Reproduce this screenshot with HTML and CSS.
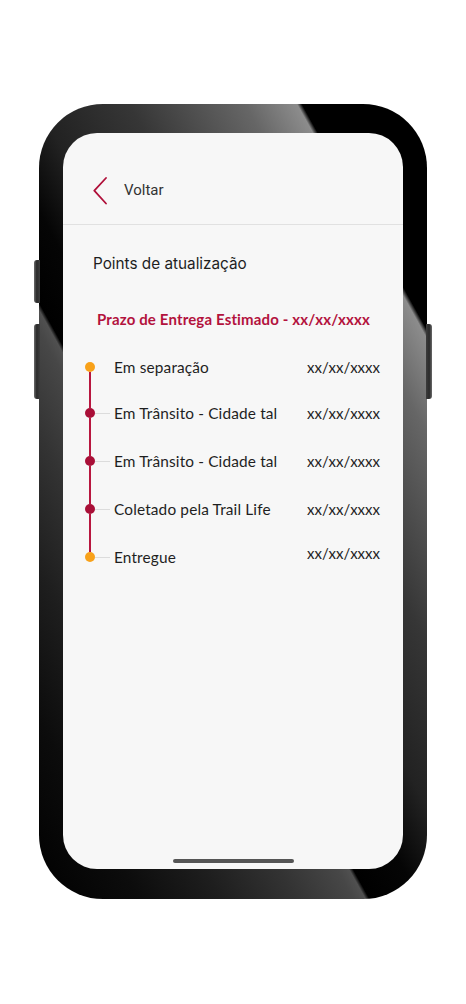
FILE: index.html
```html
<!DOCTYPE html>
<html lang="pt-BR">
<head>
<meta charset="utf-8">
<title>Points de atualização</title>
<link rel="stylesheet" href="styles.css">
</head>
<body>
<div class="stage">
  <div class="phone">
    <span class="side-btn side-l1"></span>
    <span class="side-btn side-l2"></span>
    <span class="side-btn side-r"></span>
    <div class="screen">
      <header class="topbar">
        <svg class="back-icon" viewBox="0 0 14 28" width="14" height="28" aria-hidden="true">
          <polyline points="13,1 1.3,13.6 13,26.5" fill="none" stroke="#b0103a" stroke-width="1.8" stroke-linecap="round" stroke-linejoin="round"/>
        </svg>
        <span class="back-label">Voltar</span>
      </header>
      <main class="content">
        <h1 class="title">Points de atualização</h1>
        <p class="eta">Prazo de Entrega Estimado - xx/xx/xxxx</p>
        <ul class="timeline">
          <li class="step step-first">
            <span class="marker"><i class="seg seg-top"></i><b class="dot dot-orange"></b><i class="seg seg-bottom"></i></span>
            <span class="conn"></span>
            <span class="label">Em separação</span>
            <span class="date">xx/xx/xxxx</span>
          </li>
          <li class="step">
            <span class="marker"><i class="seg seg-top"></i><b class="dot dot-red"></b><i class="seg seg-bottom"></i></span>
            <span class="conn"></span>
            <span class="label">Em Trânsito - Cidade tal</span>
            <span class="date">xx/xx/xxxx</span>
          </li>
          <li class="step">
            <span class="marker"><i class="seg seg-top"></i><b class="dot dot-red"></b><i class="seg seg-bottom"></i></span>
            <span class="conn"></span>
            <span class="label">Em Trânsito - Cidade tal</span>
            <span class="date">xx/xx/xxxx</span>
          </li>
          <li class="step">
            <span class="marker"><i class="seg seg-top"></i><b class="dot dot-red"></b><i class="seg seg-bottom"></i></span>
            <span class="conn"></span>
            <span class="label">Coletado pela Trail Life</span>
            <span class="date">xx/xx/xxxx</span>
          </li>
          <li class="step step-last">
            <span class="marker"><i class="seg seg-top"></i><b class="dot dot-orange"></b><i class="seg seg-bottom"></i></span>
            <span class="conn"></span>
            <span class="label">Entregue</span>
            <span class="date date-raised">xx/xx/xxxx</span>
          </li>
        </ul>
      </main>
      <div class="home-bar"></div>
    </div>
  </div>
</div>
</body>
</html>
```

FILE: styles.css
```css
* { box-sizing: border-box; }

html, body {
  margin: 0;
  padding: 0;
  background: #ffffff;
}

body {
  width: 466px;
  height: 1004px;
  overflow: hidden;
  font-family: "Lato", "Open Sans", sans-serif;
}

.stage {
  padding: 104px 0 0 39px;
}

.phone {
  position: relative;
  width: 388px;
  height: 795px;
  border-radius: 64px;
  padding: 29px 24px 30px 24px;
  background: linear-gradient(61deg,
    #000000 0%,
    #0c0c0c 12%,
    #1e1e1e 22%,
    #333333 31%,
    #474747 38%,
    #505050 39.4%,
    #000000 39.9%,
    #050505 46%,
    #222222 53%,
    #363636 64%,
    #666666 78%,
    #8c8c8c 84.3%,
    #000000 84.9%,
    #000000 100%);
}

.side-btn {
  position: absolute;
  width: 6px;
  background: linear-gradient(90deg, #6a6a6a 0%, #2a2a2a 45%, #3c3c3c 100%);
}

.side-l1 {
  left: -5px;
  top: 156px;
  height: 43px;
  border-radius: 3px 0 0 3px;
}

.side-l2 {
  left: -5px;
  top: 220px;
  height: 75px;
  border-radius: 3px 0 0 3px;
}

.side-r {
  right: -5px;
  top: 220px;
  height: 75px;
  border-radius: 0 3px 3px 0;
  background: linear-gradient(90deg, #3c3c3c 0%, #2a2a2a 55%, #6a6a6a 100%);
}

.screen {
  width: 340px;
  height: 736px;
  border-radius: 34px;
  background: #f7f7f7;
  overflow: hidden;
  display: flex;
  flex-direction: column;
}

.topbar {
  height: 92px;
  padding: 44px 0 0 30px;
  border-bottom: 1px solid #e1e1e1;
  display: flex;
  align-items: flex-start;
}

.back-icon {
  display: block;
  flex: 0 0 14px;
}

.back-label {
  margin-left: 17px;
  margin-top: 3px;
  font-family: "Roboto", sans-serif;
  font-size: 15px;
  line-height: 20px;
  color: #333333;
}

.content {
  display: flex;
  flex-direction: column;
}

.title {
  margin: 29px 0 0 30px;
  font-family: "Inter", sans-serif;
  font-weight: 400;
  font-size: 15.3px;
  line-height: 20px;
  color: #1e1e1e;
}

.eta {
  margin: 35px 0 0 34px;
  font-family: "Lato", sans-serif;
  font-weight: 700;
  font-size: 15px;
  letter-spacing: 0.15px;
  line-height: 20px;
  color: #b3123d;
}

.timeline {
  list-style: none;
  margin: 16px 0 0 22px;
  padding: 0;
  display: flex;
  flex-direction: column;
}

.step {
  height: 48px;
  display: flex;
  align-items: center;
}

.step-first {
  height: 44px;
}

.marker {
  flex: 0 0 10px;
  align-self: stretch;
  display: flex;
  flex-direction: column;
  align-items: center;
}

.seg {
  flex: 1;
  width: 2px;
  background: #b8163f;
}

.step-first .seg-top,
.step-last .seg-bottom {
  background: transparent;
}

.dot {
  flex: 0 0 10px;
  width: 10px;
  height: 10px;
  border-radius: 50%;
}

.dot-orange { background: #f8a11a; }
.dot-red { background: #a90f37; }

.conn {
  flex: 0 0 15px;
  height: 1px;
  background: #dcdcdc;
  margin-right: 4px;
}

.step-first .conn {
  background: transparent;
}

.label {
  flex: 0 0 193px;
  font-family: "Lato", sans-serif;
  font-size: 15.4px;
  letter-spacing: 0.15px;
  line-height: 20px;
  color: #1f1f1f;
}

.date {
  font-family: "Lato", sans-serif;
  font-size: 15px;
  line-height: 20px;
  color: #1f1f1f;
}

.date-raised {
  margin-bottom: 8px;
}

.home-bar {
  margin: auto auto 6px auto;
  width: 121px;
  height: 4px;
  border-radius: 3px;
  background: #555555;
}
```
